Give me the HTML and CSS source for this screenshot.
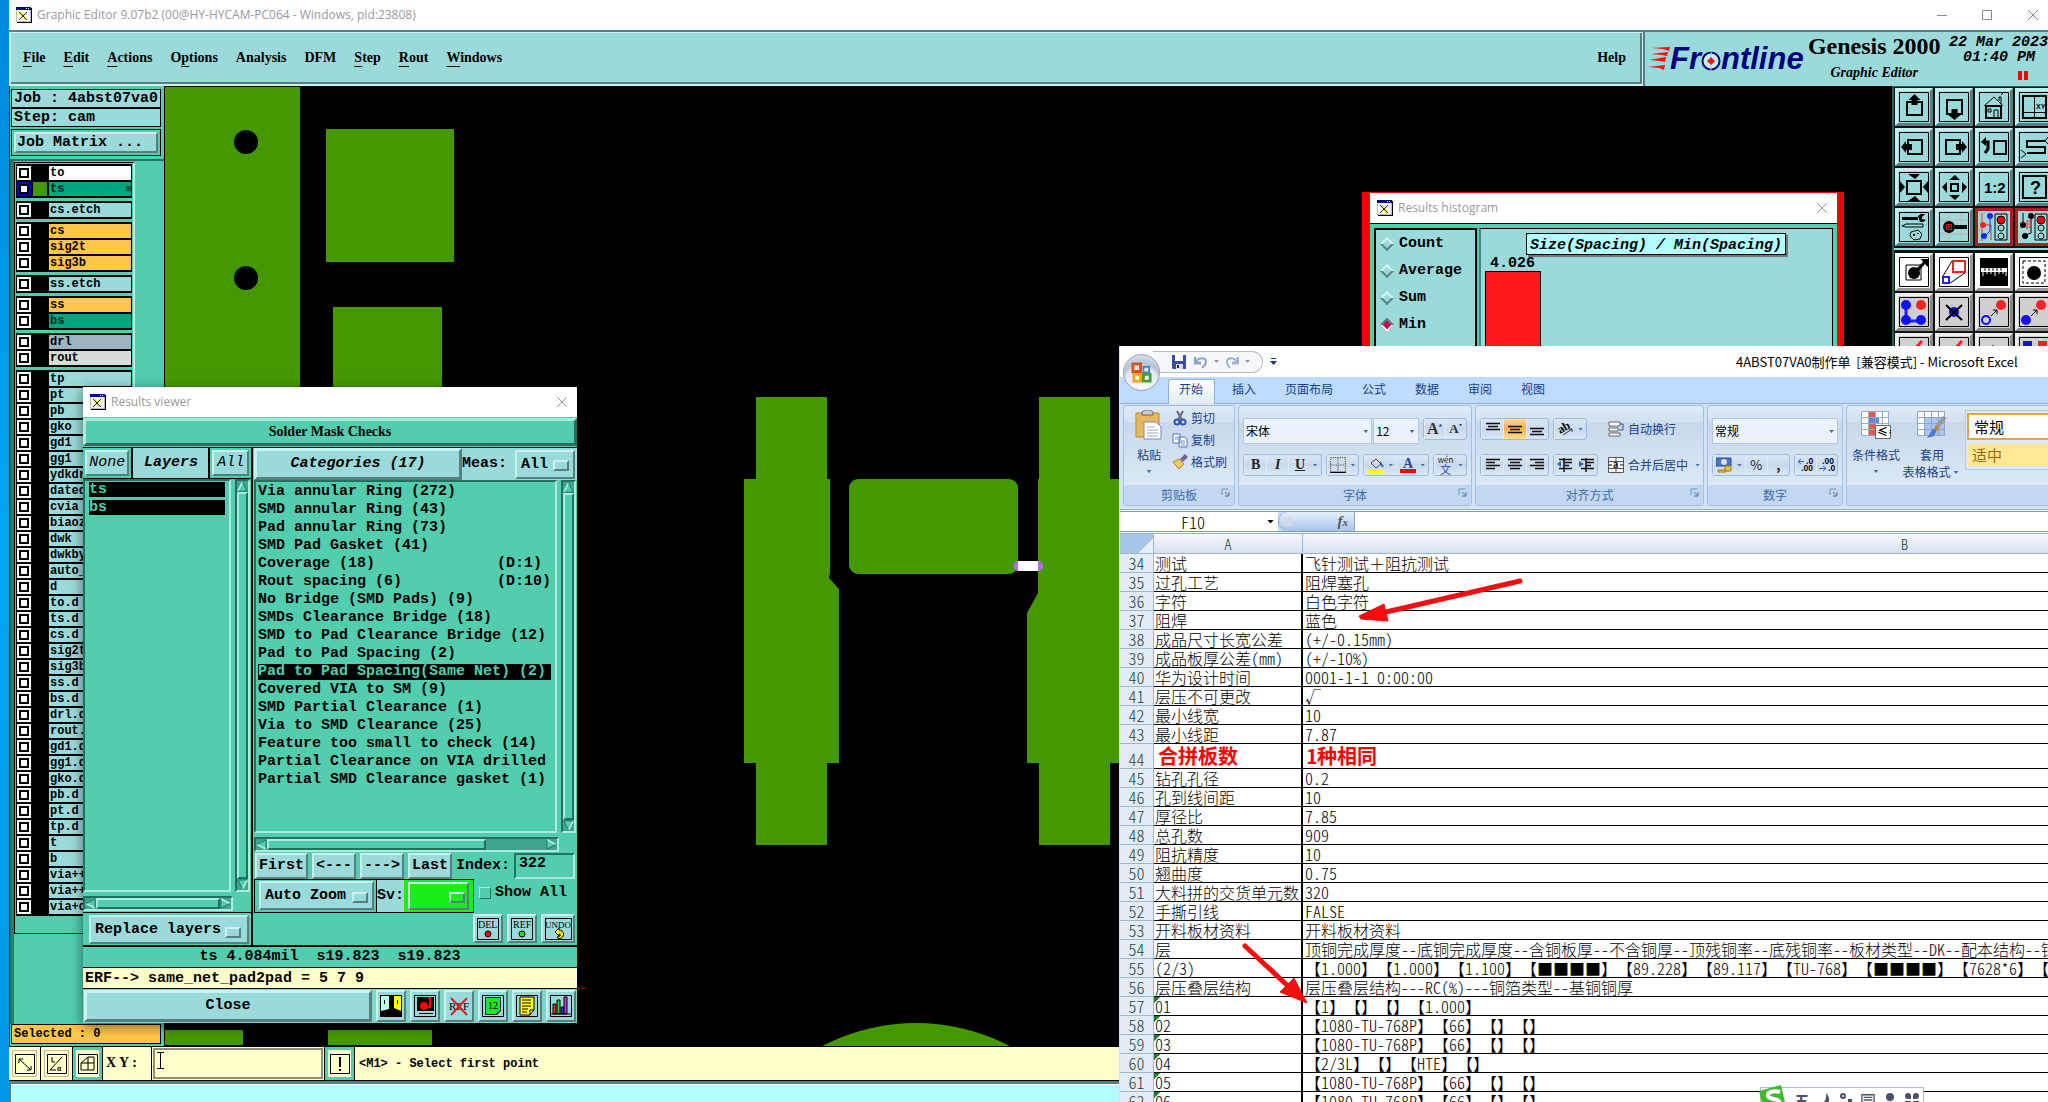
FILE: index.html
```html
<!DOCTYPE html>
<html lang="zh-CN">
<head>
<meta charset="utf-8">
<title>Graphic Editor</title>
<link rel="stylesheet" href="styles.css">
</head>
<body>
<svg width="0" height="0" class="defs" aria-hidden="true">
  <symbol id="xlogo" viewBox="0 0 16 16"><path fill="#000" d="M1 1h15v15H1z"/><path fill="#fff" d="M0 0h15v15H0z"/><path fill="#bbb" d="M0 0h15v15H0zM1 1v13h13V1z" fill-rule="evenodd"/><path fill="#000080" d="M0 0h15v3H0z"/><path fill="#fff" d="M10 1h1v1h-1zM12 1h1v1h-1z"/><path fill="#f3ef2c" d="M3 5h3l3 4 2 4H9L6 10z"/><path stroke="#222" d="M3 5l8 8M11 5l-8 8" fill="none"/></symbol>
  <symbol id="close" viewBox="0 0 12 12"><path d="M1 1l10 10M11 1L1 11" stroke="#999" fill="none"/></symbol>
  <symbol id="tri" viewBox="0 0 12 12"><path d="M6 1l5 10H1z" fill="#52ceae"/><path d="M6 1L1 11" stroke="#a9ecdb" stroke-width="2"/><path d="M1 11h10L6 1" stroke="#22705e" fill="none"/></symbol>
  <symbol id="launch" viewBox="0 0 9 9"><path d="M1 7V1h6" stroke="#6f94c4" fill="none"/><path d="M4 4l3 3M8 4v4H4" stroke="#56749b" fill="none"/></symbol>
  <symbol id="frame" viewBox="0 0 30 30"><path d="M.5.5h29v29H.5z" fill="none" stroke="#000"/></symbol>
</svg>

<div class="desktop">
<main class="editor">
  <header class="titlebar"><svg class="logo"><use href="#xlogo"/></svg><span>Graphic Editor 9.07b2 (00@HY-HYCAM-PC064 - Windows, pid:23808)</span>
    <svg class="winctl" viewBox="0 0 102 12"><path d="M0 6.500h10M45.500 1.500h9v9h-9zM91 1l10 10M101 1L91 11" stroke="#888" fill="none"/></svg>
  </header>
  <div class="menurow">
    <nav class="menus">
      <a href="#"><u>F</u>ile</a><a href="#"><u>E</u>dit</a><a href="#"><u>A</u>ctions</a><a href="#">O<u>p</u>tions</a><a href="#">Analysis</a><a href="#">DFM</a><a href="#"><u>S</u>tep</a><a href="#"><u>R</u>out</a><a href="#"><u>W</u>indows</a><a href="#" class="help">Help</a>
    </nav>
    <div class="brand">
      <div class="frontline"><svg viewBox="0 0 22 24"><path fill="#ff8f88" d="M4 0h18v1zM0 10h18v1zM2 6h18v1z"/><path fill="#f01414" d="M4 1l18-1-1 4-6-2zM3 7l17-2-1 4-5-1zM1 13l17-3-1 5-5-1zM0 20l17-2-1 5-5-2z"/></svg><b>Fr<svg class="o" viewBox="0 0 20 20"><circle cx="10" cy="10" r="8.500" fill="#c8eeee" stroke="#000080" stroke-width="2"/><path d="M10 0v20" stroke="#9bdada"/><path d="M10 6l4 4-4 4-4-4z" fill="#f01414"/></svg>ntline</b></div>
      <div class="product"><strong>Genesis 2000</strong><em>Graphic Editor</em></div>
      <div class="clock"><time>22 Mar 2023</time><span>01:40 PM</span><i></i></div>
    </div>
  </div>

  <div class="work">
    <aside class="side">
      <div class="info">Job : 4abst07va0</div>
      <div class="info">Step: cam</div>
      <div class="matrix"><button class="bevel">Job Matrix ...</button></div>
      <div class="layers">
        <div class="layerlist">
          <div class="grp"><label class="white"><input type="checkbox"><i></i><span>to</span></label><label class="sel"><input type="checkbox"><i></i><span>ts<b>⊞</b></span></label></div>
          <div class="grp"><label><input type="checkbox"><i></i><span>cs.etch</span></label></div>
          <div class="grp"><label class="sig"><input type="checkbox"><i></i><span>cs</span></label><label class="sig"><input type="checkbox"><i></i><span>sig2t</span></label><label class="sig"><input type="checkbox"><i></i><span>sig3b</span></label></div>
          <div class="grp"><label><input type="checkbox"><i></i><span>ss.etch</span></label></div>
          <div class="grp"><label class="sig"><input type="checkbox"><i></i><span>ss</span></label><label class="mask"><input type="checkbox"><i></i><span>bs</span></label></div>
          <div class="grp"><label class="drill"><input type="checkbox"><i></i><span>drl</span></label><label class="rout"><input type="checkbox"><i></i><span>rout</span></label></div>
          <div class="grp">
            <label><input type="checkbox"><i></i><span>tp</span></label><label><input type="checkbox"><i></i><span>pt</span></label><label><input type="checkbox"><i></i><span>pb</span></label><label><input type="checkbox"><i></i><span>gko</span></label><label><input type="checkbox"><i></i><span>gd1</span></label><label><input type="checkbox"><i></i><span>gg1</span></label><label><input type="checkbox"><i></i><span>ydkdr</span></label><label><input type="checkbox"><i></i><span>dated</span></label><label><input type="checkbox"><i></i><span>cvia</span></label><label><input type="checkbox"><i></i><span>biaoz</span></label><label><input type="checkbox"><i></i><span>dwk</span></label><label><input type="checkbox"><i></i><span>dwkby</span></label><label><input type="checkbox"><i></i><span>auto_</span></label><label><input type="checkbox"><i></i><span>d</span></label><label><input type="checkbox"><i></i><span>to.d</span></label><label><input type="checkbox"><i></i><span>ts.d</span></label><label><input type="checkbox"><i></i><span>cs.d</span></label><label><input type="checkbox"><i></i><span>sig2t</span></label><label><input type="checkbox"><i></i><span>sig3b</span></label><label><input type="checkbox"><i></i><span>ss.d</span></label><label><input type="checkbox"><i></i><span>bs.d</span></label><label><input type="checkbox"><i></i><span>drl.d</span></label><label><input type="checkbox"><i></i><span>rout.</span></label><label><input type="checkbox"><i></i><span>gd1.d</span></label><label><input type="checkbox"><i></i><span>gg1.d</span></label><label><input type="checkbox"><i></i><span>gko.d</span></label><label><input type="checkbox"><i></i><span>pb.d</span></label><label><input type="checkbox"><i></i><span>pt.d</span></label><label><input type="checkbox"><i></i><span>tp.d</span></label><label><input type="checkbox"><i></i><span>t</span></label><label><input type="checkbox"><i></i><span>b</span></label><label><input type="checkbox"><i></i><span>via++</span></label><label><input type="checkbox"><i></i><span>via++</span></label><label><input type="checkbox"><i></i><span>via+d</span></label>
          </div>
        </div>
      </div>
      <div class="selected">Selected : 0</div>
    </aside>

    <svg class="board" aria-label="board view"><g transform="translate(-164 -86)" fill="#449900">
      <path d="M165 87h135v320H165zM326 129h128v133H326zM333 307h109v90H333zM165 1030h78v15h-78zM328 1030h104v15H328z"/>
      <circle cx="246" cy="142" r="12" fill="#000"/><circle cx="246" cy="278" r="12" fill="#000"/>
      <path d="M756 397h71v82h3v93l-1 6 10 11v174h-12v82h-71v-82h-12V479h12z"/>
      <rect x="849" y="479" width="169" height="95" rx="9"/>
      <path d="M1039 397h71v82h30v284h-30v82h-71v-82h-12V613l11-20V479h1z"/>
      <path d="M1018 561h20v10h-20z" fill="#fff"/>
      <path d="M1018 561c-6 1-6 9 0 10zM1038 561c7 0 7 10 0 10z" fill="#b26cf0"/>
      <circle cx="916" cy="1226" r="203"/>
      <path d="M578 988h8" stroke="#c01010"/>
    </g></svg>

    <aside class="tools">
      <div class="toolgrid">
        <button><svg viewBox="0 0 30 30"><use href="#frame"/><path d="M8 10h15v13H8z" class="s2"/><path d="M15.500 2l6 6h-3v5h-6V8h-3z"/></svg></button>
        <button><svg viewBox="0 0 30 30"><use href="#frame"/><path d="M8 8h15v14H8z" class="s2"/><path d="M15.500 28l6-5h-3v-6h-6v6h-3z"/></svg></button>
        <button><svg viewBox="0 0 30 30"><use href="#frame"/><path d="M5 14l10-9 9 9M20 9V5h2v7M22 3l2-2" class="s1"/><path d="M7 14h15v12H7z" class="s2"/><path d="M9 17h3v3H9zM15 26v-8h4v8" class="s1"/></svg></button>
        <button><svg viewBox="0 0 30 30"><use href="#frame"/><path d="M4 4h23v22H4z" class="s2"/><path d="M15.500 4v22M4 20.500h23" class="s1"/><text x="17" y="17" font-size="7">XY</text></svg></button>
        <button><svg viewBox="0 0 30 30"><use href="#frame"/><path d="M9 8h14v14H9z" class="s2"/><path d="M2 15l5-6v3h6v6H7v3z"/></svg></button>
        <button><svg viewBox="0 0 30 30"><use href="#frame"/><path d="M7 8h14v14H7z" class="s2"/><path d="M28 15l-5-6v3h-6v6h6v3z"/></svg></button>
        <button><svg viewBox="0 0 30 30"><use href="#frame"/><path d="M15 9h12v13H15z" class="s2"/><path d="M5 10h4v7l-3 4" fill="none" stroke="#000" stroke-width="3"/><path d="M2 10l5-5v9z"/></svg></button>
        <button><svg viewBox="0 0 30 30"><use href="#frame"/><path d="M26 9H8v6h18v6H8" class="s2"/><path d="M29 5l-3 4 3 3M2 18l5 4-5 4" class="s1"/></svg></button>
        <button><svg viewBox="0 0 30 30"><use href="#frame"/><path d="M8 9h14v13H8z" class="s2"/><path d="M9 2h12l-5 5zM9 29h12l-5-5zM1 9l5 6-5 6zM29 9l-5 6 5 6z"/></svg></button>
        <button><svg viewBox="0 0 30 30"><use href="#frame"/><path d="M12 12h7v7h-7z" class="s2"/><path d="M10 8h11l-5-5zM10 23h11l-5 5zM8 10l-5 5 5 6zM23 10l5 5-5 6z"/></svg></button>
        <button><svg viewBox="0 0 30 30"><use href="#frame"/><text x="5" y="21" font-size="15" font-weight="bold">1:2</text></svg></button>
        <button><svg viewBox="0 0 30 30"><use href="#frame"/><path d="M4 4h23v22H4z" class="s2"/><text x="11" y="22" font-size="18" font-weight="bold">?</text></svg></button>
        <button><svg viewBox="0 0 30 30"><use href="#frame"/><path d="M3 5h16v3H3zM19 4l3-2h4l-3 3v2l4 1-3 2h-3z"/><path d="M3 14l4-2h17v3H7zM12 20l7-2 4 4-2 5-6 1-4-4z" class="s1"/><path d="M14 22h2v2h-2zM18 21h2v1h-2z"/></svg></button>
        <button><svg viewBox="0 0 30 30"><use href="#frame"/><path d="M10 1v28M22 1v28M1 8h28M1 22h28" stroke="#c8b0b8" fill="none"/><circle cx="10" cy="15" r="6"/><path d="M16 13h12v4H16z"/><path d="M7.500 12.500h5v5h-5z" stroke="#f00" fill="none"/><path d="M9.500 14.500h1v1h-1z" stroke="#f00"/></svg></button>
        <button class="on"><svg viewBox="0 0 30 30"><path d="M3 1v28M3 13h9v15" stroke="#f22" fill="none"/><path d="M11 5v14l-5 5" stroke="#22f" fill="none"/><circle cx="11" cy="4" r="3" fill="#22f"/><circle cx="5" cy="24" r="3" fill="#22f"/><circle cx="4" cy="13" r="3" fill="#f22"/><path d="M16 2h12v26H16z" class="s1"/><circle cx="22" cy="8" r="4" fill="#f00" stroke="#000"/><circle cx="22" cy="16" r="3" class="s1"/><circle cx="22" cy="24" r="3" class="s1"/></svg></button>
        <button class="on"><svg viewBox="0 0 30 30"><path d="M4 1v12M12 5v16l-8 3" class="s1"/><circle cx="12" cy="4" r="3"/><circle cx="4" cy="13" r="3"/><circle cx="6" cy="24" r="3"/><path d="M8 8v9M8 9h4M8 12h4M8 15h4" stroke="#f22" fill="none"/><path d="M16 2h12v26H16z" class="s1"/><circle cx="22" cy="8" r="4" fill="#f00" stroke="#000"/><circle cx="22" cy="16" r="3" class="s1"/><circle cx="22" cy="24" r="3" class="s1"/></svg></button>
      </div>
      <div class="toolgrid second">
        <button class="w"><svg viewBox="0 0 30 30"><use href="#frame"/><path d="M7 8h15v15H7z" class="s1"/><circle cx="15" cy="16" r="6"/><path d="M17 12l7-7-2-3h7v8l-3-3-6 7z"/></svg></button>
        <button class="w"><svg viewBox="0 0 30 30"><use href="#frame"/><path d="M4 19L13 4M11 26l15-10" class="s1"/><path d="M14 4h12v11H14z" stroke="#e22" stroke-width="2" fill="none"/><path d="M4 20h6v6H4z" stroke="#22f" stroke-width="2" fill="none"/></svg></button>
        <button class="w"><svg viewBox="0 0 30 30"><path d="M1 1h28v28H1z"/><path d="M2 11h26v4H2z" fill="#fff"/><path d="M4 12v7M8 12v5M12 12v5M16 12v7M20 12v5M24 12v5M27 12v7" stroke="#fff"/><path d="M6 11v3M10 11v3M14 11v3M18 11v3M22 11v3" stroke="#000"/></svg></button>
        <button class="w"><svg viewBox="0 0 30 30"><use href="#frame"/><path d="M4 4h22v22H4z" class="s1" stroke-dasharray="3 2"/><circle cx="15" cy="16" r="7"/></svg></button>
        <button class="g"><svg viewBox="0 0 30 30"><use href="#frame"/><path d="M7 8v16h16" stroke="#22f" stroke-width="3" fill="none"/><g fill="#11f"><circle cx="7" cy="8" r="5"/><circle cx="7" cy="23" r="5"/><circle cx="22" cy="23" r="5"/></g><circle cx="22" cy="8" r="5" fill="#f22"/></svg></button>
        <button class="g"><svg viewBox="0 0 30 30"><use href="#frame"/><circle cx="15" cy="15" r="5" fill="#11c"/><path d="M7 8l16 15M23 8L7 23" class="s2"/></svg></button>
        <button class="g"><svg viewBox="0 0 30 30"><use href="#frame"/><circle cx="22" cy="8" r="5" fill="#f22"/><circle cx="7" cy="23" r="4" stroke="#11f" stroke-width="2" fill="none"/><path d="M12 19l6-6M14 13h4v4" class="s1"/></svg></button>
        <button class="g"><svg viewBox="0 0 30 30"><use href="#frame"/><circle cx="22" cy="8" r="5" fill="#f22"/><circle cx="7" cy="23" r="5" fill="#11f"/><path d="M12 19l6-6M14 13h4v4" class="s1"/></svg></button>
        <button class="g"><svg viewBox="0 0 30 30"><use href="#frame"/><path d="M23 4L14 14" stroke="#e22" stroke-width="3"/></svg></button>
        <button class="g"><svg viewBox="0 0 30 30"><use href="#frame"/><path d="M23 4L14 14" stroke="#e22" stroke-width="3"/></svg></button>
        <button class="g"><svg viewBox="0 0 30 30"><use href="#frame"/><path d="M13 8l8 4-6 4z"/></svg></button>
        <button class="g"><svg viewBox="0 0 30 30"><use href="#frame"/><path d="M4 4h9v9H4z" fill="#11d"/><path d="M19 4h9v9h-9z" fill="#e22"/></svg></button>
      </div>
    </aside>
  </div>

  <div class="command">
    <button class="cb"><svg viewBox="0 0 20 20"><path d="M.5.5h19v19H.5z" class="s1"/><path d="M4 5l12 11M4 9V5h4M12 16h4v-4" class="s1"/></svg></button>
    <button class="cb"><svg viewBox="0 0 20 20"><path d="M.5.500h19v19H.5zM3 16L15 3M3 16h6M5 3v5h3" class="s1"/><text x="10" y="17" font-size="7">α</text></svg></button>
    <button class="cb teal"><svg viewBox="0 0 20 20"><path d="M.5.500h19v19H.5zM3 9V16h13V3h-6zM10 3v13M3 9h13" class="s1"/></svg></button>
    <label class="xy" for="xy">X Y :</label>
    <input id="xy" class="xyin" type="text">
    <button class="cb teal"><svg viewBox="0 0 20 20"><path d="M.5.500h19v19H.5z" class="s1"/><path d="M9 3h2v10H9zM9 15h2v2H9z"/></svg></button>
    <p class="prompt">&lt;M1&gt; - Select first point</p>
    <svg class="caret" viewBox="0 0 7 17"><path d="M0 .5h7M0 16.500h7M3.500 1v15" class="s1"/></svg>
  </div>
  <footer class="coords"><div></div></footer>
</main>

<section class="hist">
  <header class="titlebar"><svg class="logo"><use href="#xlogo"/></svg><span>Results histogram</span><svg class="x"><use href="#close"/></svg></header>
  <div class="histbody">
    <div class="modes">
      <label><input type="radio" name="m">Count</label><label><input type="radio" name="m">Average</label><label><input type="radio" name="m">Sum</label><label><input type="radio" name="m" checked>Min</label>
    </div>
    <div class="plot"><h2>Size(Spacing) / Min(Spacing)</h2><div class="bar"><span>4.026</span><i></i></div></div>
  </div>
</section>

<section class="viewer">
  <header class="titlebar"><svg class="logo"><use href="#xlogo"/></svg><span>Results viewer</span><svg class="x"><use href="#close"/></svg></header>
  <h2 class="check">Solder Mask Checks</h2>
  <div class="panes">
    <div class="lpane">
      <div class="lhead"><button class="bevel it">None</button><h3>Layers</h3><button class="bevel it">All</button></div>
      <div class="scrollarea">
        <ul class="list llist"><li class="inv">ts</li><li class="inv">bs</li></ul>
        <div class="vbar"><svg><use href="#tri"/></svg><i></i><svg class="down"><use href="#tri"/></svg></div>
      </div>
      <div class="hbar"><svg class="left"><use href="#tri"/></svg><i></i><svg class="right"><use href="#tri"/></svg></div>
      <div class="rep"><span class="opt"><select class="bevel" aria-label="Layer mode"><option>Replace layers</option></select></span></div>
    </div>
    <div class="rpane">
      <div class="rhead"><button class="bevel cat">Categories (17)</button><label for="meas">Meas:</label><span class="opt meas"><select id="meas" class="bevel"><option>All</option></select></span></div>
      <div class="scrollarea">
        <ul class="list clist">
          <li>Via annular Ring (272)</li><li>SMD annular Ring (43)</li><li>Pad annular Ring (73)</li><li>SMD Pad Gasket (41)</li><li>Coverage (18)<span>(D:1)</span></li><li>Rout spacing (6)<span>(D:10)</span></li><li>No Bridge (SMD Pads) (9)</li><li>SMDs Clearance Bridge (18)</li><li>SMD to Pad Clearance Bridge (12)</li><li>Pad to Pad Spacing (2)</li><li class="inv">Pad to Pad Spacing(Same Net) (2)</li><li>Covered VIA to SM (9)</li><li>SMD Partial Clearance (1)</li><li>Via to SMD Clearance (25)</li><li>Feature too small to check (14)</li><li>Partial Clearance on VIA drilled</li><li>Partial SMD Clearance gasket (1)</li>
        </ul>
        <div class="vbar"><svg><use href="#tri"/></svg><i></i><svg class="down"><use href="#tri"/></svg></div>
      </div>
      <div class="hbar part"><svg class="left"><use href="#tri"/></svg><i></i><svg class="right"><use href="#tri"/></svg></div>
      <div class="navrow"><button class="bevel">First</button><button class="bevel">&lt;---</button><button class="bevel">---&gt;</button><button class="bevel">Last</button><label for="idx">Index:</label><input id="idx" type="text" value="322"></div>
      <div class="zoomrow"><div class="zbox"><span class="opt zoom"><select class="bevel" aria-label="Zoom mode"><option>Auto Zoom</option></select></span><label class="sv" for="sv">Sv:</label><span class="opt green"><select id="sv" class="bevel"><option></option></select></span></div><label class="showall"><input type="checkbox">Show All</label></div>
      <div class="iconrow">
        <button class="bevel"><svg viewBox="0 0 22 22"><path d="M.5.500h21v21H.5z" class="s1"/><text x="1" y="10" font-size="10">DEL</text><circle cx="11" cy="16" r="3" fill="#f00" stroke="#000"/></svg></button>
        <button class="bevel"><svg viewBox="0 0 22 22"><path d="M.5.500h21v21H.5z" class="s1"/><text x="2" y="10" font-size="10">REF</text><circle cx="11" cy="16" r="3" fill="#1fe01f" stroke="#000"/></svg></button>
        <button class="bevel wide"><svg viewBox="0 0 27 22"><path d="M.5.500h26v21H.5z" class="s1"/><text x="0" y="10" font-size="9">UNDO</text><path d="M10 14l4-4v2c6 0 6 8 0 9l-2-2c4 0 4-3 2-3v2z" fill="#ee2" stroke="#000"/></svg></button>
      </div>
    </div>
  </div>
  <p class="measure">ts 4.084mil&nbsp; s19.823&nbsp; s19.823</p>
  <p class="erf">ERF--&gt; same_net_pad2pad = 5 7 9</p>
  <div class="closerow"><button class="bevel closebtn">Close</button>
    <button class="bevel ib"><svg viewBox="0 0 22 22"><path d="M0 0h22v22H0z"/><path d="M1 1h8v13l-8 2z" fill="#bfe"/><path d="M14 1h7v15l-7-3z" fill="#ff0"/><path d="M4 5h1v4H4zM17 5h1v4h-1z"/></svg></button>
    <button class="bevel ib"><svg viewBox="0 0 22 22"><path d="M.5.500h21v21H.5z" class="s1"/><path d="M3 2h17v14H3zM5 18h14v1H5z"/><circle cx="10" cy="11" r="4" fill="#f00"/><path d="M14 3h2v9h-4" stroke="#f00" fill="none" stroke-width="2"/></svg></button>
    <button class="bevel ib"><svg viewBox="0 0 22 22"><text x="1" y="15" font-size="11">REF</text><path d="M3 3l16 17M19 3L3 20" stroke="#d22" stroke-width="2"/></svg></button>
    <button class="bevel ib"><svg viewBox="0 0 22 22"><path d="M.5.500h21v21H.5z" class="s1"/><path d="M3 2h16v14l-4 4H3z" fill="#0e2c3a"/><path d="M4 3h14v12l-4 4H4z" fill="#1fe81f"/><text x="6" y="14" font-size="10" font-weight="bold">12</text></svg></button>
    <button class="bevel ib"><svg viewBox="0 0 22 22"><path d="M.5.500h21v21H.5z" class="s1"/><path d="M4 2h14v13l-4 5H4z" fill="#ff2" stroke="#000"/><path d="M6 5h9M6 8h9M6 11h9M6 14h6M6 17h5M14 20v-5h4" class="s1"/></svg></button>
    <button class="bevel ib"><svg viewBox="0 0 22 22"><path d="M.5.500h21v21H.5z" class="s1"/><path d="M3 19V9h3v10z" fill="#e33" stroke="#000"/><path d="M7 19V5h3v14z" fill="#2c4" stroke="#000"/><path d="M11 19v-7h3v7z" fill="#33e" stroke="#000"/><path d="M14 19V2h3v17z" fill="#c3c" stroke="#000"/><path d="M1 19h20" class="s1"/></svg></button>
  </div>
</section>

<section class="excel">
  <header class="xtitle">
    <div class="qat">
      <svg viewBox="0 0 14 14"><path d="M0 0h14v14H1l-1-1z" fill="#3a4fa0"/><path d="M3 0h8v6H3z" fill="#fff"/><path d="M4 9h7v5H4z" fill="#dde"/><path d="M5 10h2v3H5z" fill="#226"/></svg>
      <svg class="hist-ic" viewBox="0 0 14 14"><path d="M1 2v6h6" fill="none" stroke="#8ba3c6" stroke-width="3"/><path d="M2 7c3-5 10-5 10 0 0 3-2 4-4 6" fill="none" stroke="#8ba3c6" stroke-width="2"/></svg><i class="dd gray"></i>
      <svg viewBox="0 0 14 14"><path d="M13 2v6H7" fill="none" stroke="#9fb2cc" stroke-width="3"/><path d="M12 7C9 2 2 2 2 7c0 3 1 4 3 6" fill="none" stroke="#9fb2cc" stroke-width="2"/></svg><i class="dd gray"></i>
    </div>
    <svg class="more" viewBox="0 0 7 7"><path d="M1 0h5v1H1zM0 3h7L3.500 7z" fill="#1c3270"/></svg>
    <h1>4ABST07VA0制作单&nbsp; [兼容模式] - Microsoft Excel</h1>
  </header>
  <button class="orb" aria-label="Office"><svg viewBox="0 0 24 24" fill="none" stroke-width="3"><path d="M3 3h8v8H3z" stroke="#d9541c"/><path d="M14 6h6v6h-6z" stroke="#3f86d0" stroke-width="2"/><path d="M4 14h7v7H4z" stroke="#f3a81c"/><path d="M14 14h7v7h-7z" stroke="#4a9a3a"/></svg></button>
  <nav class="tabs"><a href="#" class="cur">开始</a><a href="#">插入</a><a href="#">页面布局</a><a href="#">公式</a><a href="#">数据</a><a href="#">审阅</a><a href="#">视图</a></nav>
  <div class="ribbon">
    <div class="rg clip"><div class="rb">
      <button class="big"><svg width="28" height="30" viewBox="0 0 28 30"><path d="M1 3h23v24H1z" fill="#e9b65c" stroke="#b98a3a"/><path d="M7 5V2l3-2h5l3 2v3z" fill="#ccc" stroke="#666"/><path d="M9 12h12l5 5v12H9z" fill="#fff" stroke="#7a8db0"/><path d="M12 17h8M12 20h11M12 23h11M12 26h11" stroke="#9ab"/></svg>粘贴<i class="dd"></i></button>
      <div class="col"><button><svg viewBox="0 0 16 16"><path d="M5 1l5 9M11 1L6 10" stroke="#667" stroke-width="2"/><circle cx="5" cy="12" r="2.500" fill="none" stroke="#2f56b0" stroke-width="2"/><circle cx="11" cy="12" r="2.500" fill="none" stroke="#2f56b0" stroke-width="2"/></svg>剪切</button><button><svg viewBox="0 0 16 16"><path d="M1 2h7v9H1zM7 5h6l2 2v8H7z" fill="#fff" stroke="#4f74b8"/><path d="M3 5h4M3 7h3M9 9h4M9 11h4M9 13h4" stroke="#6d8fd0"/></svg>复制</button><button><svg viewBox="0 0 16 16"><path d="M1 8l6-3 5 5-5 5z" fill="#f0c75e" stroke="#a8842c"/><path d="M8 5l5-5 3 3-5 5z" fill="#75629a"/></svg>格式刷</button></div>
    </div><h4>剪贴板<svg><use href="#launch"/></svg></h4></div>

    <div class="rg font"><div class="rb rows">
      <div class="rr"><span class="pick w130"><select aria-label="字体"><option>宋体</option></select><i class="dd"></i></span><span class="pick w46"><select aria-label="字号"><option>12</option></select><i class="dd"></i></span><div class="bg gap"><button><b class="A">A</b><i class="up"></i></button><button><b class="A sm">A</b><i class="up dn"></i></button></div></div>
      <div class="rr"><div class="bg w79"><button><b class="ser">B</b></button><button><i class="ser">I</i></button><button><u class="ser">U</u></button><i class="dd"></i></div><div class="bg w35"><button><svg viewBox="0 0 14 14"><path d="M.5.500h13v13H.5zM7 1v12M1 7h12" fill="none" stroke="#555" stroke-dasharray="1 1"/><path d="M0 13.500h14" stroke="#000"/></svg></button><i class="dd"></i></div><div class="bg w67"><button><svg viewBox="0 0 16 16"><path d="M3 6l5-4 5 5-5 4z" fill="#cfdcf0" stroke="#445"/><path d="M12 5l3 5" stroke="#2f66b0" stroke-width="2"/><path d="M0 12h16v4H0z" fill="#ff0"/></svg></button><i class="dd"></i><button><svg viewBox="0 0 16 16"><text x="3" y="11" font-size="14" font-weight="bold" font-family="Liberation Serif" fill="#2c4b88">A</text><path d="M0 12h16v4H0z" fill="#f00"/></svg></button><i class="dd"></i></div><div class="bg w35"><button class="wen"><small>wén</small>文</button><i class="dd"></i></div></div>
    </div><h4>字体<svg><use href="#launch"/></svg></h4></div>

    <div class="rg align"><div class="rb">
      <div class="rows">
        <div class="rr"><div class="bg w69"><button><svg viewBox="0 0 14 14"><path d="M0 1.500h14M2 4.500h10M0 7.500h14" stroke="#111" stroke-width="1.500"/></svg></button><button class="hot"><svg viewBox="0 0 14 14"><path d="M0 4.500h14M2 7.500h10M0 10.500h14" stroke="#111" stroke-width="1.500"/></svg></button><button><svg viewBox="0 0 14 14"><path d="M0 6.500h14M2 9.500h10M0 12.500h14" stroke="#111" stroke-width="1.500"/></svg></button></div><div class="bg w35"><button><svg viewBox="0 0 16 16"><text x="0" y="11" font-size="12" font-weight="bold" font-family="Liberation Serif" transform="rotate(-30 5 8)">ab</text><path d="M5 14L14 8M11 8h3v3" stroke="#333" fill="none"/></svg></button><i class="dd"></i></div></div>
        <div class="rr"><div class="bg w69"><button><svg viewBox="0 0 14 14"><path d="M0 1.500h14M0 4.500h9M0 7.500h14M0 10.500h9" stroke="#111" stroke-width="1.500"/></svg></button><button><svg viewBox="0 0 14 14"><path d="M0 1.500h14M2 4.500h10M0 7.500h14M2 10.500h10" stroke="#111" stroke-width="1.500"/></svg></button><button><svg viewBox="0 0 14 14"><path d="M0 1.500h14M5 4.500h9M0 7.500h14M5 10.500h9" stroke="#111" stroke-width="1.500"/></svg></button></div><div class="bg w44"><button><svg viewBox="0 0 16 14"><path d="M2 1.500h13M7 4.500h8M7 7.500h5M2 10.500h13M7 0v14" stroke="#111" stroke-width="1.500"/><path d="M0 6l4-3v6z" fill="#2f66c0"/></svg></button><button><svg viewBox="0 0 16 14"><path d="M2 1.500h13M7 4.500h8M7 7.500h5M2 10.500h13M7 0v14" stroke="#111" stroke-width="1.500"/><path d="M5 6L0 3v6z" fill="#2f66c0"/></svg></button></div></div>
      </div>
      <div class="rows wrap"><div class="rr"><button><svg viewBox="0 0 16 16"><path d="M1 1h11v4H1zM1 7h9v3H1zM1 12h11v3H1z" fill="#fff" stroke="#666"/><path d="M12 3h3v6h-4" fill="none" stroke="#2f56a0"/></svg>自动换行</button></div><div class="rr"><button><svg viewBox="0 0 16 16"><path d="M.5.500h15v15H.5zM.5 4.500h15M.5 11.500h15M8 0v4M8 12v4" fill="#fff" stroke="#555"/><text x="5" y="11" font-size="9" font-weight="bold">a</text><path d="M1 8h3M12 8h3" stroke="#000"/></svg>合并后居中<i class="dd"></i></button></div></div>
    </div><h4>对齐方式<svg><use href="#launch"/></svg></h4></div>

    <div class="rg num"><div class="rb rows">
      <div class="rr"><span class="pick w127"><select aria-label="数字格式"><option>常规</option></select><i class="dd"></i></span></div>
      <div class="rr"><div class="bg w79"><button><svg viewBox="0 0 16 16"><path d="M0 1h15v8H0z" fill="#4a76c0" stroke="#2d4f92"/><circle cx="8" cy="5" r="3" fill="#dde"/><path d="M9 9h6v5H9zM2 13h8v2H2z" fill="#f2c230" stroke="#a87a10"/></svg></button><i class="dd"></i><button class="tx">%</button><button class="tx"><b>,</b></button></div><div class="bg w44"><button><svg viewBox="0 0 16 14"><text x="8" y="6" font-size="8" font-weight="bold">.0</text><text x="3" y="13" font-size="8" font-weight="bold">.00</text><path d="M0 3.500h6M3 1L0 3.500 3 6" fill="none" stroke="#2f66c0"/></svg></button><button><svg viewBox="0 0 16 14"><text x="3" y="6" font-size="8" font-weight="bold">.00</text><text x="9" y="13" font-size="8" font-weight="bold">.0</text><path d="M0 10.500h7M4 8l3 2.500L4 13" fill="none" stroke="#2f66c0"/></svg></button></div></div>
    </div><h4>数字<svg><use href="#launch"/></svg></h4></div>

    <div class="rg style"><div class="rb">
      <button class="big"><svg width="30" height="30" viewBox="0 0 30 30"><path d="M.5 1.500h27v24H.5z" fill="#fff"/><path d="M7 1h7v24H7z" fill="#e8574a"/><path d="M7 7h11v6H7z" fill="#5c86dc"/><path d="M.5 1.500h27v24H.5zM7.500 1v25M14.500 1v25M21.500 1v25M0 7.500h28M0 13.500h28M0 19.500h28" fill="none" stroke="#9aa9c8"/><path d="M14.500 15.500h15v13h-15z" fill="#fff" stroke="#666"/><text x="16" y="26" font-size="11" font-weight="bold">≤≠</text></svg>条件格式<i class="dd"></i></button>
      <button class="big two"><svg width="30" height="30" viewBox="0 0 30 30"><path d="M.5 1.500h27v24H.5z" fill="#fff"/><path d="M7 7h21v19H7z" fill="#a9c4ee"/><path d="M.5 1.500h27v24H.5zM7.500 1v25M14.500 1v25M21.500 1v25M0 7.500h28M0 13.500h28M0 19.500h28" fill="none" stroke="#8da4cc"/><path d="M28 7L19 18" stroke="#999" stroke-width="4"/><path d="M21 17l-4 9-7 2 6-9z" fill="#4a7ad0"/><path d="M20 15l3 3-3 3-3-3z" fill="#c8862c"/></svg>套用<span>表格格式<i class="dd"></i></span></button>
      <div class="gallery"><button class="normal">常规</button><button class="mid">适中</button></div>
    </div><h4></h4></div>
  </div>
  <div class="fbar"><label for="fx" class="nb">F10<i class="dd"></i></label><div class="fx"><i></i><b>f<small>x</small></b></div><input id="fx" type="text"></div>
  <div class="sheet">
  <table>
    <colgroup><col class="c0"><col class="c1"><col class="c2"></colgroup>
    <thead><tr><th class="corner"></th><th>A</th><th>B</th></tr></thead>
    <tbody>
    <tr><th>34</th><td>测试</td><td>飞针测试<span class="full">＋</span>阻抗测试</td></tr>
    <tr><th>35</th><td>过孔工艺</td><td>阻焊塞孔</td></tr>
    <tr><th>36</th><td>字符</td><td>白色字符</td></tr>
    <tr><th>37</th><td>阻焊</td><td>蓝色</td></tr>
    <tr><th>38</th><td>成品尺寸长宽公差</td><td>(+/-0.15mm)</td></tr>
    <tr><th>39</th><td>成品板厚公差(mm)</td><td>(+/-10%)</td></tr>
    <tr><th>40</th><td>华为设计时间</td><td>0001-1-1 0:00:00</td></tr>
    <tr><th>41</th><td>层压不可更改</td><td>√</td></tr>
    <tr><th>42</th><td>最小线宽</td><td>10</td></tr>
    <tr><th>43</th><td>最小线距</td><td>7.87</td></tr>
    <tr class="red"><th>44</th><td>合拼板数</td><td>1种相同</td></tr>
    <tr><th>45</th><td>钻孔孔径</td><td>0.2</td></tr>
    <tr><th>46</th><td>孔到线间距</td><td>10</td></tr>
    <tr><th>47</th><td>厚径比</td><td>7.85</td></tr>
    <tr><th>48</th><td>总孔数</td><td>909</td></tr>
    <tr><th>49</th><td>阻抗精度</td><td>10</td></tr>
    <tr><th>50</th><td>翘曲度</td><td>0.75</td></tr>
    <tr><th>51</th><td>大料拼的交货单元数</td><td>320</td></tr>
    <tr><th>52</th><td>手撕引线</td><td>FALSE</td></tr>
    <tr><th>53</th><td>开料板材资料</td><td>开料板材资料</td></tr>
    <tr><th>54</th><td>层</td><td>顶铜完成厚度--底铜完成厚度--含铜板厚--不含铜厚--顶残铜率--底残铜率--板材类型--DK--配本结构--铜箔</td></tr>
    <tr><th>55</th><td>(2/3)</td><td>【1.000】【1.000】【1.100】【■■■■】【89.228】【89.117】【TU-768】【■■■■】【7628*6】【】</td></tr>
    <tr><th>56</th><td>层压叠层结构</td><td>层压叠层结构---RC(%)---铜箔类型--基铜铜厚</td></tr>
    <tr class="txt"><th>57</th><td>01</td><td>【1】【】【】【1.000】</td></tr>
    <tr class="txt"><th>58</th><td>02</td><td>【1080-TU-768P】【66】【】【】</td></tr>
    <tr class="txt"><th>59</th><td>03</td><td>【1080-TU-768P】【66】【】【】</td></tr>
    <tr class="txt"><th>60</th><td>04</td><td>【2/3L】【】【HTE】【】</td></tr>
    <tr class="txt"><th>61</th><td>05</td><td>【1080-TU-768P】【66】【】【】</td></tr>
    <tr class="txt"><th>62</th><td>06</td><td>【1080-TU-768P】【66】【】【】</td></tr>
    </tbody>
  </table>
  </div>
  <svg class="notes" aria-hidden="true"><g transform="translate(-1119 -346)" fill="#f60d0d"><path d="M1520 581L1386 612M1245 946l43 40" stroke="#f60d0d" stroke-width="5" stroke-linecap="round"/><path d="M1359 616l25-12 4 17-27-2zM1307 1003l-13-25-14 14z" stroke="#f60d0d" stroke-linejoin="round"/></g></svg>
</section>

<div class="ime">
  <svg class="sogou" viewBox="0 0 28 28"><path d="M0 6l22-6 6 26-22 4z" fill="#3dba2f"/><path d="M21 7c-6-2-13 0-12 4s12 2 12 7-8 5-13 3" fill="none" stroke="#fff" stroke-width="4"/></svg>
  <b>五</b>
  <svg viewBox="0 0 14 14"><path d="M9 0c5 5 4 12-3 13-2 0-4-1-5-2 6 0 9-4 8-11z" fill="#4a5068"/></svg>
  <svg viewBox="0 0 14 14"><circle cx="4" cy="3" r="2" fill="none" stroke="#4a5068" stroke-width="2"/><path d="M9 6h4v4l-3 3V9H9z" fill="#4a5068"/></svg>
  <svg viewBox="0 0 16 14"><path d="M1 1h14v11H1zM3 4h10M3 7h10M5 10h6" fill="none" stroke="#4a5068" stroke-width="1.500"/></svg>
  <svg viewBox="0 0 14 14"><circle cx="7" cy="4" r="4" fill="#4a5068"/><path d="M1 14c0-7 12-7 12 0z" fill="#4a5068"/></svg>
  <svg viewBox="0 0 14 14"><path d="M0 3a3 3 0 0 1 6 0v3H3a3 3 0 0 1-3-3zM8 3a3 3 0 1 1 3 3H8zM0 8h6v6H0zM8 8h6v6H8z" fill="#4a5068"/></svg>
</div>
</div>
</body>
</html>
```
FILE: styles.css
```css
* { box-sizing: border-box; }
:root {
  --cyan: #9bdada;
  --teal: #52ceae;
  --lt: #c9f1ee;
  --dk: #557f80;
  --cream: #ffffcc;
  --mono: "Liberation Mono", monospace;
  --ui: "Open Sans", "Noto Sans CJK SC", sans-serif;
  --cjk: "Noto Sans CJK SC", sans-serif;
}
body { margin: 0; font: bold 15px/18px var(--mono); color: #000; }
button, input, select { font: inherit; color: inherit; margin: 0; padding: 0; border: 0; border-radius: 0; background: none; }
h1, h2, h3, h4, p, ul { margin: 0; padding: 0; font: inherit; list-style: none; }
a { color: inherit; text-decoration: none; }
select { appearance: none; }
svg { display: block; flex: none; }
.defs { position: absolute; }
.s1 { fill: none; stroke: #000; }
.s2 { fill: none; stroke: #000; stroke-width: 2; }

.desktop { position: relative; height: 100vh; overflow: hidden; background: linear-gradient(#0088dd, #00a8f0 50%, #0097e6); }

.editor { position: absolute; inset: 0 0 0 9px; display: flex; flex-direction: column; background: #000; }
.titlebar { display: flex; align-items: center; flex: none; height: 30px; padding-left: 7px; background: #fff; color: #999; font: 12px/20px var(--ui); }
.titlebar .logo { width: 16px; height: 16px; margin-right: 5px; }
.titlebar .x { width: 12px; height: 12px; margin: 0 9px 0 auto; }
.titlebar .winctl { width: 102px; height: 12px; margin: 0 9px 0 auto; }

.bevel { border: 2px solid; border-color: var(--lt) var(--dk) var(--dk) var(--lt); background: var(--cyan); }

.menurow { display: flex; flex: none; height: 56px; border-top: 2px solid var(--dk); background: var(--lt); font: bold 14px/20px "Liberation Serif", serif; }
.menus { flex: 1; display: flex; align-items: center; gap: 18px; margin: 1px 1px 2px 2px; padding: 0 14px 0 12px; border-right: 2px solid var(--dk); border-bottom: 2px solid var(--dk); background: var(--cyan); }
.menus u { text-underline-offset: 4px; }
.menus .help { margin-left: auto; }
.brand { flex: none; width: 405px; display: flex; border-left: 2px solid var(--dk); background: var(--cyan); overflow: hidden; }
.frontline { display: flex; align-items: center; width: 168px; padding-left: 3px; }
.frontline > svg { width: 22px; height: 24px; }
.frontline b { display: flex; align-items: center; font: italic bold 31px/32px "Liberation Sans", sans-serif; color: #000080; }
.frontline .o { width: 20px; height: 20px; margin-top: 4px; }
.product { width: 138px; display: flex; flex-direction: column; align-items: center; white-space: nowrap; font-size: 24px; line-height: 29px; }
.product em { font-size: 14px; line-height: 24px; }
.clock { font: italic bold 15px/15px var(--mono); padding: 3px 0 0 8px; white-space: nowrap; }
.clock time, .clock span { display: block; }
.clock span { padding-left: 14px; }
.clock i { display: block; width: 10px; height: 9px; margin: 6px 0 0 69px; border: solid #f00; border-width: 0 4px; }

.work { flex: 1; min-height: 0; display: flex; }
.side { flex: none; width: 155px; display: flex; flex-direction: column; background: var(--teal); border-left: 1px solid #000; padding: 3px 3px 0 1px; }
.info { flex: none; height: 19px; padding-left: 2px; border: 1px solid #000; background: var(--cyan); line-height: 18px; white-space: nowrap; overflow: hidden; }
.matrix { height: 27px; margin: 2px 0 3px; padding: 2px; border: 1px solid #000; flex: none; }
.matrix .bevel { display: block; width: 100%; height: 21px; line-height: 18px; text-align: left; padding-left: 1px; }
.layers { flex: 1; min-height: 0; margin: 0 -3px 0 -1px; padding: 1px 0 0 3px; border-top: 2px solid #22705e; border-left: 1px solid #22705e; background: linear-gradient(90deg, #2f7c6a 3px, var(--teal) 3px); }
.layerlist { width: 121px; padding: 1px 1px 14px; border: 1px solid #000; border-right: 2px solid #b5eee0; }
.grp { margin-bottom: 3px; padding: 1px; background: #000; }
.grp label { display: flex; gap: 2px; height: 16px; padding: 1px 0; font-size: 12px; line-height: 14px; }
.grp input { appearance: none; flex: none; width: 14px; height: 14px; background: #fff; border: 2px solid #fff; box-shadow: inset 0 0 0 2px #000; }
.grp i { width: 14px; }
.grp span { flex: 1; padding-left: 1px; background: var(--cyan); display: flex; justify-content: space-between; }
.grp b { font-size: 8px; }
.grp .white span { background: #fff; }
.grp .sel span, .grp .mask span { background: #00a67d; color: #03231a; }
.grp .sel i { background: #449900; }
.grp .sel input { border-color: #0000c0; }
.grp .sig span { background: #ffc64b; }
.grp .drill span { background: #9bb4c0; }
.grp .rout span { background: #dadada; }
.selected { flex: none; height: 20px; margin-bottom: 2px; padding-left: 2px; border: 1px solid #000; background: #ffc64b; font-size: 12px; line-height: 18px; }

.board { flex: 1; min-width: 0; height: 100%; background: #000; }

.tools { flex: none; width: 156px; border-left: 2px solid #2b6155; background: #111; padding-top: 1px; overflow: hidden; border-top: 1px solid #2b6155; }
.toolgrid { display: grid; grid-template-columns: repeat(4, 38px); gap: 2px; padding-left: 1px; }
.toolgrid.second { margin-top: 2px; padding-top: 3px; border-top: 2px solid var(--cyan); }
.toolgrid button { width: 38px; height: 38px; padding: 1px; background: var(--cyan); border: 3px solid; border-color: #c3efee #557f80 #557f80 #c3efee; font-family: "Liberation Sans", sans-serif; }
.toolgrid svg { width: 30px; height: 30px; }
.toolgrid .on { border-color: #a82020; }
.toolgrid .w { background: #fff; border-color: #fff #999 #999 #fff; }
.toolgrid .g { background: #cfcfcf; border-color: #eee #8a8a8a #8a8a8a #eee; }

.command { position: relative; flex: none; display: flex; align-items: stretch; height: 33px; margin-top: 1px; background: #000; gap: 1px; font-size: 12px; }
.caret { position: absolute; left: 148px; top: 5px; width: 7px; height: 17px; }
.cb { width: 31px; display: grid; place-items: center; background: var(--cream); box-shadow: inset 0 0 0 3px var(--cream), inset 0 0 0 4px #bdbd9a; }
.cb svg { width: 20px; height: 20px; }
.cb.teal { width: 29px; box-shadow: inset 0 0 0 3px var(--teal); }
.xy { width: 48px; padding-left: 3px; line-height: 32px; background: var(--cream); font-family: "Liberation Serif", serif; font-size: 14px; }
.xyin { width: 172px; background: var(--cream); border: 3px solid #8f8f78; outline: 1px solid var(--cream); outline-offset: -1px; }
.prompt { flex: 1; padding-left: 4px; line-height: 34px; background: var(--cream); }
.coords { flex: none; height: 22px; padding: 3px 0 0 2px; background: var(--dk); border-top: 1px solid #000; }
.coords div { height: 20px; background: #b3ffff; border-top: 1px solid #fff; }

.hist { position: absolute; left: 1362px; top: 192px; width: 482px; height: 200px; border: solid #ee0505; border-width: 1px 7px 0 8px; display: flex; flex-direction: column; }
.histbody { flex: 1; display: flex; gap: 2px; padding: 4px; background: var(--teal); border-top: 1px solid #000; }
.modes { width: 103px; padding: 0 0 0 4px; border: 2px solid #000; background: var(--cyan); }
.modes label { display: flex; align-items: center; gap: 7px; height: 27px; padding-left: 2px; }
.modes input { appearance: none; width: 10px; height: 10px; rotate: 45deg; border: 2px solid; border-color: #d6f5f4 var(--dk) var(--dk) #d6f5f4; }
.modes input:checked { background: #c8004c; border-color: var(--dk) #e6fafa #e6fafa var(--dk); }
.plot { flex: 1; border: 1px solid #000; border-left: 2px solid var(--dk); background: var(--cyan); padding: 4px 0 0 4px; }
.plot h2 { width: 260px; height: 22px; margin: 0 auto 0 41px; padding-left: 3px; border: 1px solid #000; background: #b3ffff; box-shadow: 2px 2px #777; font-style: italic; line-height: 24px; white-space: nowrap; }
.bar { width: 56px; }
.bar span { display: block; height: 16px; padding-left: 5px; }
.bar i { display: block; height: 100px; background: #ff1a1a; border: 1px solid #000; }

.viewer { position: absolute; left: 83px; top: 387px; width: 494px; background: var(--teal); box-shadow: 0 3px 12px #0008; }
.check { height: 28px; margin-top: 1px; border: 3px solid; border-color: #a9ecdb #22705e #22705e #a9ecdb; text-align: center; font: bold 14px/22px "Liberation Serif", serif; }
.panes { display: flex; margin-top: 1px; border-top: 1px solid #000; border-bottom: 2px solid #000; }
.lpane { width: 170px; border-right: 2px solid #000; display: flex; flex-direction: column; }
.lhead { display: flex; height: 31px; border-bottom: 1px solid #000; font-style: italic; }
.lhead .bevel { margin: 2px; width: 45px; }
.lhead .bevel:last-child { width: 37px; }
.it { font-style: italic; font-weight: normal; }
.lhead h3 { width: 80px; border: solid #000; border-width: 0 2px; background: var(--cyan); text-align: center; line-height: 30px; }
.scrollarea { flex: 1; display: flex; gap: 4px; min-height: 0; }
.list { flex: 1; border: 2px solid; border-color: #22705e #a9ecdb #a9ecdb #22705e; }
.list li { height: 18px; line-height: 18px; display: flex; white-space: pre; }
.llist { padding: 1px 4px; }
.llist li { margin-bottom: 3px; height: 15px; line-height: 16px; }
.list .inv { background: #000; color: var(--teal); }
.clist .inv { line-height: 16px; height: 16px; margin: 1px 0; }
.vbar, .hbar { display: flex; border: 2px solid; border-color: #22705e #a9ecdb #a9ecdb #22705e; background: #3fa68d; }
.vbar { width: 15px; flex-direction: column; margin-right: 1px; }
.vbar svg, .hbar svg { width: 11px; height: 11px; }
.vbar i, .hbar i { flex: 1; background: var(--teal); border: 2px solid; border-color: #a9ecdb #22705e #22705e #a9ecdb; }
.down { rotate: 180deg; }
.left { rotate: -90deg; }
.right { rotate: 90deg; }
.hbar { height: 15px; margin: 4px 18px 1px 0; }
.hbar.part .right { margin-left: 60px; }
.rep { height: 33px; border-top: 1px solid #000; padding: 2px 2px 1px 6px; }
.opt { position: relative; display: block; }
.opt select { display: block; width: 100%; height: 29px; padding-left: 4px; }
.opt::after { content: ""; position: absolute; right: 8px; top: 12px; width: 12px; height: 7px; border: 2px solid; border-color: #c9f1ee #557f80 #557f80 #c9f1ee; pointer-events: none; }
.rpane { flex: 1; display: flex; flex-direction: column; padding-left: 1px; min-width: 0; }
.rhead { display: flex; height: 32px; background: var(--cyan); }
.rhead label { flex: 1; line-height: 32px; }
.cat { width: 208px; font-style: italic; border-width: 3px; }
.meas { width: 62px; padding: 2px 2px 0 0; }
.clist { height: 353px; padding: 1px 4px 0 2px; }
.clist li { justify-content: space-between; }
.clist li span { width: 54px; }
.navrow { display: flex; gap: 4px; height: 26px; padding: 0 2px 0 1px; }
.navrow .bevel { width: 44px; height: 26px; line-height: 20px; }
.navrow .bevel:first-child { width: 53px; }
.navrow label { line-height: 26px; }
.navrow input { flex: 1; min-width: 0; padding: 0 0 4px 3px; border: 2px solid; border-color: #22705e #a9ecdb #a9ecdb #22705e; background: var(--teal); }
.zoomrow { display: flex; height: 35px; }
.zbox { display: flex; height: 34px; border: 1px solid #000; }
.zoom { width: 122px; padding: 1px 2px 0 4px; border-right: 1px solid #000; }
.sv { width: 27px; background: var(--cyan); line-height: 32px; white-space: nowrap; }
.green { width: 69px; padding: 2px 4px; background: #18ee18; }
.green select { background: #18ee18; height: 28px; }
.showall { display: flex; align-items: center; gap: 4px; padding: 0 0 8px 5px; white-space: nowrap; }
.showall input { appearance: none; width: 12px; height: 12px; border: 1px solid; border-color: #a9ecdb #22705e #22705e #a9ecdb; }
.iconrow { display: flex; justify-content: flex-end; gap: 4px; height: 31px; padding-right: 2px; }
.iconrow .bevel { width: 30px; height: 29px; display: grid; place-items: center; }
.iconrow .wide { width: 34px; }
.iconrow svg { height: 22px; }
.iconrow text, .closerow text { font-family: "Liberation Serif", serif; font-weight: normal; }
.measure { height: 21px; line-height: 20px; text-align: center; border-bottom: 1px solid #000; }
.erf { height: 21px; padding-left: 2px; background: var(--cream); line-height: 21px; border-bottom: 1px solid #000; }
.closerow { display: flex; gap: 4px; height: 34px; padding: 1px; background: #7fd6c5; }
.closebtn { flex: 1; border-width: 3px; }
.ib { width: 30px; display: grid; place-items: center; }
.ib svg { width: 22px; height: 22px; }

.excel { position: absolute; left: 1119px; top: 346px; right: 0; bottom: 0; display: flex; flex-direction: column; overflow: hidden; background: #fff; border-left: 1px solid #cfe0f5; color: #15428b; font: 12px/16px var(--cjk); }
.xtitle { display: flex; align-items: center; flex: none; height: 31px; padding-left: 33px; }
.qat { display: flex; align-items: center; gap: 4px; width: 110px; height: 22px; padding-left: 19px; border: 1px solid #b8bcc6; border-left: 0; border-radius: 0 11px 11px 0; background: #f6f7fa; }
.qat svg { width: 14px; height: 14px; }
.qat .hist-ic { margin-left: 4px; }
.dd { flex: none; display: inline-block; width: 5px; height: 3px; margin: 0 3px; background: #4a6fae; clip-path: polygon(0 0, 100% 0, 50% 100%); }
.dd.gray { margin: 0 2px; background: #999; }
.more { width: 7px; height: 7px; margin-left: 7px; }
.xtitle h1 { margin-left: 459px; color: #000; font: 13px/20px "Noto Sans CJK SC", sans-serif; white-space: nowrap; }
.orb { position: absolute; left: 3px; top: 8px; width: 37px; height: 37px; border: 1px solid #9aa3b8; border-radius: 50%; background: radial-gradient(circle at 50% 80%, #fff, #e4e7ee 50%, #b9c2d4 60%, #eef0f5); display: grid; place-items: center; z-index: 2; }
.orb svg { width: 23px; height: 23px; }
.tabs { flex: none; display: flex; gap: 1px; height: 27px; padding: 2px 0 0 48px; background: #bfdbff; border-bottom: 1px solid #8db2e3; }
.tabs a { height: 25px; padding: 2px 14px 0; }
.tabs .cur { height: 26px; padding: 1px 11px 0 10px; margin-right: 2px; border: 1px solid #8db2e3; border-bottom: 0; border-radius: 3px 3px 0 0; background: linear-gradient(#fff, #dfeaf7); }
.ribbon { flex: none; display: flex; gap: 3px; height: 106px; padding: 1px 0 3px 3px; background: #d3e3f5; border-bottom: 1px solid #8fb0dd; }
.rg { flex: none; display: flex; flex-direction: column; border: 1px solid #a3c0e2; border-radius: 3px; background: linear-gradient(#dfeaf6, #d3e0f0 16%, #c8d8eb 17%, #dbe8f6 80%); overflow: hidden; }
.rg h4 { position: relative; flex: none; height: 20px; background: #c1d8f0; color: #3e6aaa; text-align: center; line-height: 20px; }
.rg h4 svg { position: absolute; right: 4px; top: 3px; width: 9px; height: 9px; }
.rb { flex: 1; display: flex; padding: 0 4px; }
.rb svg { width: 16px; height: 16px; }
.clip { width: 112px; } .font { width: 234px; } .align { width: 229px; } .num { width: 136px; } .style { width: 400px; }
.big { display: flex; flex-direction: column; align-items: center; width: 42px; padding-top: 4px; line-height: 17px; white-space: nowrap; }
.rb .big svg { width: 30px; height: 30px; margin-bottom: 6px; }
.big .dd { margin-top: 7px; }
.big span .dd { margin: 0 3px 3px; }
.col { padding: 1px 0 0 2px; }
.col button { display: flex; align-items: center; gap: 3px; height: 22px; white-space: nowrap; }
.rb.rows, .rows { display: flex; flex-direction: column; gap: 11px; padding-top: 12px; }
.rr { display: flex; gap: 4px; height: 25px; }
.rows .rr + .rr { height: 22px; }
.pick { position: relative; height: 26px; border: 1px solid #b3c7e1; background: #eaf2fb; color: #000; }
.pick select { width: 100%; height: 24px; padding-left: 2px; }
.pick .dd { position: absolute; right: 0; top: 11px; }
.pick + .pick { margin-left: -3px; }
.w130 { width: 131px; } .w46 { width: 46px; } .w127 { width: 128px; }
.bg { display: flex; align-items: center; height: 22px; border: 1px solid #9ebadf; border-radius: 3px; background: linear-gradient(#dbe7f5, #c9d9ed 50%, #d9e6f5); }
.bg button { flex: 1; height: 20px; display: flex; align-items: center; justify-content: center; border-left: 1px solid #dfeaf6; color: #222; }
.bg svg { width: 16px; height: 16px; }
.w79 { width: 79px; } .w35 { width: 34px; } .w67 { width: 66px; } .w69 { width: 69px; } .w44 { width: 45px; }
.w69 svg { width: 14px; height: 14px; }
.gap { width: 45px; }
.bg .dd { margin: 0 3px 0 2px; }
.ser, .A { font: bold 14px/16px "Liberation Serif", serif; }
.bg i.ser { font-style: italic; }
.A { font-size: 16px; color: #333; }
.A.sm { font-size: 13px; }
.up { width: 4px; height: 3px; margin-bottom: 8px; background: #2f56a0; clip-path: polygon(50% 0, 100% 100%, 0 100%); }
.up.dn { clip-path: polygon(0 0, 100% 0, 50% 100%); }
.bg .wen { flex-direction: column; font-size: 11px; line-height: 10px; color: #2740b0; }
.wen small { font-size: 8px; line-height: 8px; color: #222; }
.hot { background: linear-gradient(#fbd9a0, #fcb14e 45%, #ffe08a); }
.bg .tx { font-size: 13px; }
.wrap { margin-left: 4px; padding-left: 6px; }
.wrap button { display: flex; align-items: center; gap: 4px; height: 22px; white-space: nowrap; }
.style .big { width: 54px; }
.style .rb { padding-left: 2px; }
.style .two { width: 58px; }
.gallery { flex: 1; height: 60px; margin: 4px 0 0 4px; padding: 2px 0 0 1px; border: 1px solid #b3cbe8; background: #dde9f7; display: flex; flex-direction: column; gap: 4px; }
.gallery button { text-align: left; padding-left: 5px; font-size: 15px; height: 22px; line-height: 20px; }
.gallery .normal { background: #fff; color: #000; border: 2px solid #e8a33c; height: 27px; }
.gallery .mid { background: #ffe797; color: #9c6500; }
.fbar { flex: none; display: flex; height: 21px; margin-top: 1px; border-top: 1px solid #7f9db9; border-bottom: 1px solid #7f9db9; background: #c7dbf5; color: #000; }
.nb { width: 158px; display: flex; align-items: center; justify-content: flex-end; gap: 62px; padding-right: 4px; background: #fff; font: 16px/20px var(--cjk); font-weight: 300; font-feature-settings: "hwid"; }
.nb .dd { width: 7px; height: 4px; margin: 0; background: #000; }
.fx { width: 77px; display: flex; align-items: center; justify-content: space-between; padding: 0 6px 0 4px; border: solid #8aa6cc; border-width: 0 1px; border-radius: 10px 0 0 10px; background: linear-gradient(#e6effb, #a9c4ea); }
.fx i { width: 10px; height: 10px; border-radius: 50%; background: #d3d9e6; }
.fx b { font: italic bold 15px/18px "Liberation Serif", serif; color: #555; }
.fx small { font-size: 11px; }
.fbar input { flex: 1; background: #fff; }
.sheet { flex: 1; min-height: 0; overflow: hidden; margin-top: 1px; border-top: 1px solid #8fb0dd; }
table { border-collapse: separate; border-spacing: 0; table-layout: fixed; width: 1387px; color: #000; font: 300 16px/18px var(--cjk); font-feature-settings: "hwid"; }
.full { font-feature-settings: normal; }
.c0 { width: 34px; } .c1 { width: 149px; } .c2 { width: 1204px; }
th, td { padding: 0; height: 19px; line-height: 18px; white-space: nowrap; overflow: hidden; text-align: left; }
th { font-weight: 300; text-align: center; background: #e4ecf7; border-right: 1px solid #9eb6ce; border-bottom: 1px solid #9eb6ce; color: #27413e; }
thead th { height: 20px; background: linear-gradient(#f6f9fd, #d5e0ee); font-size: 15px; }
thead .corner { background: linear-gradient(135deg, #a9c4e9 72%, #e6effa 72%); }
td { border-bottom: 1px solid #000; padding-left: 2px; }
td:nth-child(2) { border-right: 2px solid #000; padding-left: 1px; }
.red th, .red td { height: 25px; line-height: 24px; }
.red td, .red td:nth-child(2) { color: #f00; font-size: 20px; font-weight: bold; padding-left: 4px; }
.red th { line-height: 18px; vertical-align: bottom; }
.txt td:nth-child(2) { background: linear-gradient(135deg, #1c7d28 4px, transparent 5px); }
.notes { position: absolute; left: -1px; top: 0; width: 100%; height: 100%; pointer-events: none; }

.ime { position: absolute; left: 1760px; bottom: -17px; width: 164px; height: 32px; display: flex; gap: 8px; align-items: flex-start; padding: 5px 4px 0 0; background: #fff; border: 1px solid #b3c1cf; color: #4a5068; font: bold 14px/14px var(--cjk); }
.ime svg { width: 14px; height: 14px; }
.ime .sogou { width: 28px; height: 28px; margin: -8px 0 0 -2px; }
```
